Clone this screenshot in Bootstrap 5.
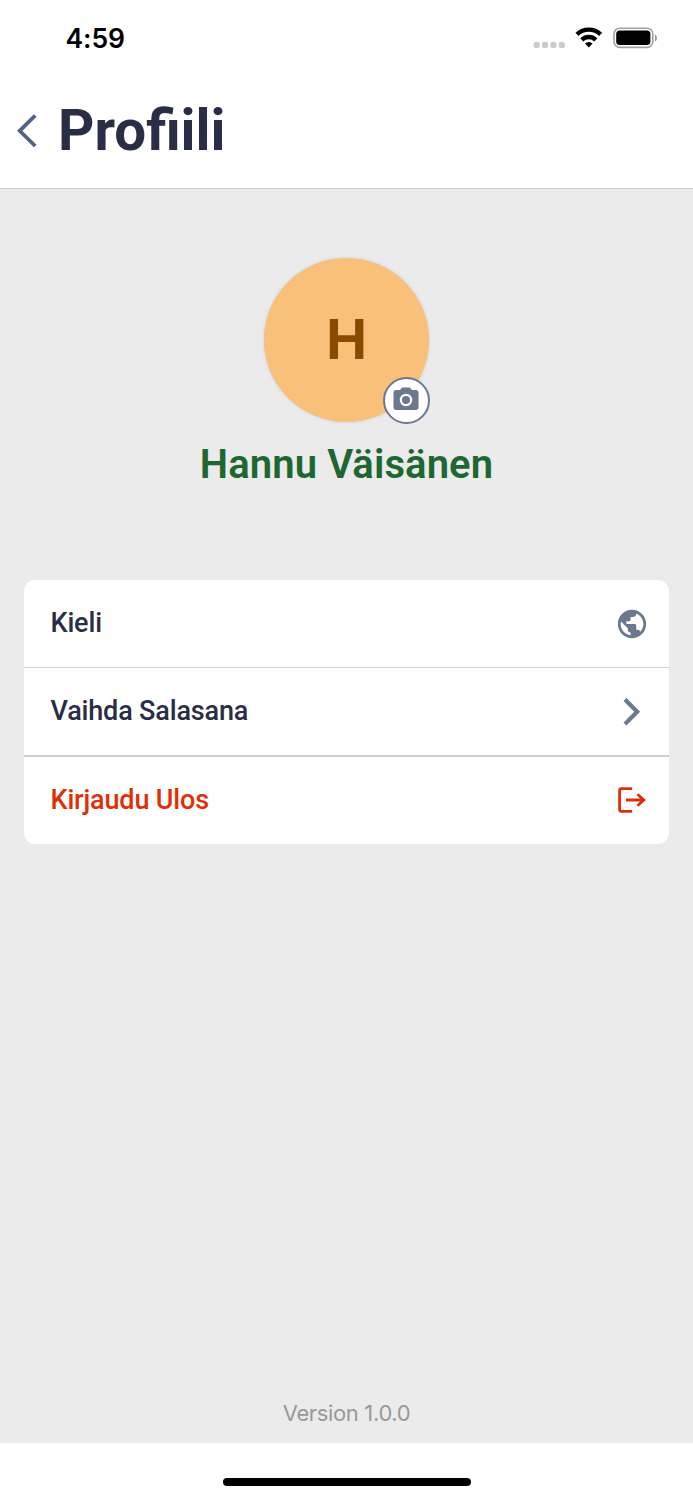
<!DOCTYPE html>
<html lang="fi">
<head>
<meta charset="utf-8">
<meta name="viewport" content="width=device-width, initial-scale=1">
<title>Profiili</title>
<link href="https://cdn.jsdelivr.net/npm/bootstrap@5.3.0/dist/css/bootstrap.min.css" rel="stylesheet">
<style>
body { font-family: Roboto, sans-serif; color: #292d45; background: #fff; }
svg { display: block; flex: none; }
.screen { height: 1500px; overflow: hidden; }
.status-bar { height: 76px; padding: 0 36px 0 65.5px; font-family: Inter, sans-serif; color: #000; }
.clock { font-size: 26.5px; font-weight: 600; line-height: 76px; letter-spacing: -.1px; }
.app-header { height: 113px; padding-left: 17px; border-bottom: 1px solid #d0d0d0; }
.page-title { font-size: 56.5px; font-weight: 700; line-height: 110px; margin-left: 20px; }
.content { background: #ebebeb; }
.avatar { width: 165px; height: 164px; margin-top: 69px; background: #f9c079; color: #884b00; font: 700 57px/162px "Liberation Sans", sans-serif; box-shadow: 0 0 3px rgba(110,130,170,.3); }
.camera-badge { left: 119px; top: 118.5px; width: 47px; height: 47px; background: #fff; border: 2px solid #6b7890; }
.camera-badge svg { margin: -1px 1px 0 0; }
.user-name { font-size: 40px; font-weight: 600; line-height: 48px; margin-top: 19px; color: #1f6731; letter-spacing: .1px; }
.menu { margin: 91px 24px 0 23.5px; border-radius: 11px; }
.menu-item { height: 88px; padding: 0 20px 0 27px; font-size: 27px; font-weight: 500; line-height: 40px; letter-spacing: -.16px; border-bottom: 1px solid #d5d5d5; }
.menu-item span { padding-bottom: 1px; }
.menu-item.second { height: 89px; border-bottom: 2px solid #cdcdcd; }
.menu-item.logout { height: 87px; color: #e02f06; border: 0; padding-bottom: 1px; }
.version { font: 400 22px/30px Inter, sans-serif; color: #999; margin-bottom: 15px; letter-spacing: -.35px; }
.home-area { height: 57.5px; padding-top: 35.5px; }
.home-bar { width: 248px; height: 8px; background: #000; }
</style>
</head>
<body>
<div class="screen d-flex flex-column">
  <div class="status-bar d-flex justify-content-between">
    <span class="clock">4:59</span>
    <svg width="126" height="76" viewBox="531 0 126 76">
      <g fill="#cbcbcb"><rect x="533.7" y="42" width="6" height="6" rx="1.8"/><rect x="542" y="42" width="6" height="6" rx="1.8"/><rect x="550.4" y="42" width="6" height="6" rx="1.8"/><rect x="558.8" y="42" width="6" height="6" rx="1.8"/></g>
      <g fill="none" stroke="#000" stroke-width="4.4"><path d="M577 34.4a17 17 0 0 1 23.6 0"/><path d="M581.8 39.8a10.2 10.2 0 0 1 14 0"/></g>
      <path d="M585 43.6a5.4 5.4 0 0 1 7.6 0l-3.8 4z"/>
      <rect x="614" y="28.2" width="38.8" height="19.2" rx="5.8" fill="none" stroke="#a0a0a0" stroke-width="1.6"/>
      <rect x="616.2" y="30.5" width="34.2" height="14.6" rx="3.6"/>
      <path d="M655 34.5c2.5 1 2.5 6 0 7z" fill="#999"/>
    </svg>
  </div>
  <header class="app-header d-flex align-items-start">
    <svg width="21" height="108" viewBox="17 76 21 108" fill="none" stroke="#506384" stroke-width="3.8"><path d="M35.2 115.5 19.7 130.8 35.2 146"/></svg>
    <h1 class="page-title mb-0">Profiili</h1>
  </header>
  <main class="content flex-grow-1 d-flex flex-column">
    <div class="avatar rounded-circle position-relative align-self-center text-center">H
      <span class="camera-badge rounded-circle position-absolute d-flex align-items-center justify-content-center">
        <svg width="30" height="30" viewBox="0 0 24 24" fill="#6b7890"><path fill-rule="evenodd" d="M9 2 7.17 4H4c-1.1 0-2 .9-2 2v12c0 1.1.9 2 2 2h16c1.1 0 2-.9 2-2V6c0-1.1-.9-2-2-2h-3.17L15 2zm3 15a5 5 0 1 1 0-10 5 5 0 0 1 0 10z"/><circle cx="12" cy="12" r="3.2"/></svg>
      </span>
    </div>
    <h2 class="user-name text-center mb-0">Hannu Väisänen</h2>
    <div class="menu bg-white overflow-hidden">
      <div class="menu-item d-flex align-items-center justify-content-between">
        <span>Kieli</span>
        <svg width="34" height="34" viewBox="0 0 24 24" fill="#6b7890"><path d="M12 2C6.48 2 2 6.48 2 12s4.48 10 10 10 10-4.48 10-10S17.52 2 12 2zm-1 17.93c-3.95-.49-7-3.85-7-7.93 0-.62.08-1.21.21-1.79L9 15v1c0 1.1.9 2 2 2v1.93zm6.9-2.54c-.26-.81-1-1.39-1.9-1.39h-1v-3c0-.55-.45-1-1-1H8v-2h2c.55 0 1-.45 1-1V7h2c1.1 0 2-.9 2-2v-.41c2.93 1.19 5 4.06 5 7.41 0 2.08-.8 3.97-2.1 5.39z"/></svg>
      </div>
      <div class="menu-item second d-flex align-items-center justify-content-between">
        <span>Vaihda Salasana</span>
        <svg width="34" height="34" viewBox="0 0 34 34" fill="none" stroke="#6b7890" stroke-width="4.2"><path d="M10 4.6 22.2 16.8 10 29"/></svg>
      </div>
      <div class="menu-item logout d-flex align-items-center justify-content-between">
        <span>Kirjaudu Ulos</span>
        <svg width="34" height="34" viewBox="0 0 34 34" fill="none" stroke="#e02f06" stroke-width="2.8"><path d="M17 5.7H6.3Q4.6 5.7 4.6 7.4V26.6Q4.6 28.3 6.3 28.3H17M11 17H29.2M22.5 11.3 28.8 17 22.5 22.7"/></svg>
      </div>
    </div>
    <div class="version text-center mt-auto">Version 1.0.0</div>
  </main>
  <div class="home-area"><div class="home-bar rounded-pill mx-auto"></div></div>
</div>
<script src="https://cdn.jsdelivr.net/npm/bootstrap@5.3.0/dist/js/bootstrap.bundle.min.js"></script>
</body>
</html>
